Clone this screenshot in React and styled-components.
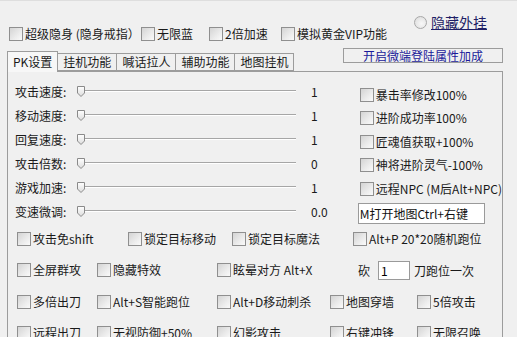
import React from "react";
import styled, { createGlobalStyle } from "styled-components";

const GlobalStyle = createGlobalStyle`
  html, body {
    margin: 0;
    padding: 0;
    background: #f0f0f0;
  }
  body {
    font-family: "Noto Sans CJK SC", sans-serif;
    font-size: 12px;
    color: #1a1a1a;
  }
`;

const topChecks = [
  { text: "超级隐身 (隐身戒指）", w: 132 },
  { text: "无限蓝", w: 68 },
  { text: "2倍加速", w: 72 },
  { text: "模拟黄金VIP功能" },
];

const tabs = ["PK设置", "挂机功能", "喊话拉人", "辅助功能", "地图挂机"];

const sliders = [
  { label: "攻击速度:", value: "1" },
  { label: "移动速度:", value: "1" },
  { label: "回复速度:", value: "1" },
  { label: "攻击倍数:", value: "0" },
  { label: "游戏加速:", value: "1" },
  { label: "变速微调:", value: "0.0" },
];

const rightChecks = [
  "暴击率修改100%",
  "进阶成功率100%",
  "匠魂值获取+100%",
  "神将进阶灵气-100%",
  "远程NPC (M后Alt+NPC)",
];

const rows = [
  [
    { text: "攻击免shift", w: 111 },
    { text: "锁定目标移动", w: 104 },
    { text: "锁定目标魔法", w: 121 },
    { text: "Alt+P 20*20随机跑位" },
  ],
  [
    { text: "多倍出刀", w: 80 },
    { text: "Alt+S智能跑位", w: 120 },
    { text: "Alt+D移动刺杀", w: 113 },
    { text: "地图穿墙", w: 87 },
    { text: "5倍攻击" },
  ],
  [
    { text: "远程出刀", w: 80 },
    { text: "无视防御+50%", w: 120 },
    { text: "幻影攻击", w: 113 },
    { text: "右键冲锋", w: 87 },
    { text: "无限召唤" },
  ],
];

const Check = ({ text, w }) => (
  <CheckItem $w={w}>
    <Box />
    <span>{text}</span>
  </CheckItem>
);

const Thumb = () => (
  <svg width="8" height="11" viewBox="0 0 8 11">
    <defs>
      <linearGradient id="tg" x1="0" y1="0" x2="0" y2="1">
        <stop offset="0" stopColor="#ffffff" />
        <stop offset="1" stopColor="#dcdcdc" />
      </linearGradient>
    </defs>
    <path d="M0.5 0.5 H7.5 V7 L4 10.5 L0.5 7 Z" fill="url(#tg)" stroke="#8a8a8a" />
  </svg>
);

const App = () => (
  <Window>
    <GlobalStyle />
    <Header>
      <TopChecks>
        {topChecks.map((c) => (
          <Check key={c.text} {...c} />
        ))}
      </TopChecks>
      <HideLink>
        <Radio />
        <span>隐藏外挂</span>
      </HideLink>
    </Header>
    <TabBar>
      <Tabs>
        {tabs.map((t, i) => (
          <Tab key={t} $active={i === 0}>
            {t}
          </Tab>
        ))}
      </Tabs>
      <BonusButton>开启微端登陆属性加成</BonusButton>
    </TabBar>
    <Panel>
      <Upper>
        <SliderCol>
          {sliders.map((s) => (
            <SliderRow key={s.label}>
              <SliderLabel>{s.label}</SliderLabel>
              <Thumb />
              <Track />
              <SliderValue>{s.value}</SliderValue>
            </SliderRow>
          ))}
        </SliderCol>
        <RightCol>
          {rightChecks.map((t) => (
            <RightRow key={t}>
              <Check text={t} />
            </RightRow>
          ))}
          <MapInput defaultValue="M打开地图Ctrl+右键" />
        </RightCol>
      </Upper>
      <OptionRow>
        {rows[0].map((c) => (
          <Check key={c.text} {...c} />
        ))}
      </OptionRow>
      <OptionRow>
        <Check text="全屏群攻" w={80} />
        <Check text="隐藏特效" w={120} />
        <Check text="眩晕对方 Alt+X" w={141} />
        <span>砍</span>
        <SmallInput defaultValue="1" />
        <span>刀跑位一次</span>
      </OptionRow>
      {rows.slice(1).map((r, i) => (
        <OptionRow key={i}>
          {r.map((c) => (
            <Check key={c.text} {...c} />
          ))}
        </OptionRow>
      ))}
    </Panel>
  </Window>
);

const Window = styled.div`
  width: 517px;
  height: 337px;
  overflow: hidden;
  background: #f0f0f0;
  border-top: 1px solid #dedede;
  box-sizing: border-box;
`;

const Header = styled.div`
  height: 45px;
  display: flex;
  justify-content: space-between;
  align-items: flex-start;
`;

const TopChecks = styled.div`
  display: flex;
  padding: 26px 0 0 9px;
`;

const CheckItem = styled.label`
  display: flex;
  align-items: center;
  flex: none;
  width: ${(p) => (p.$w ? `${p.$w}px` : "auto")};
  height: 14px;
  line-height: 14px;
  white-space: nowrap;
  cursor: default;
`;

const Box = styled.span`
  flex: none;
  width: 12px;
  height: 12px;
  margin-right: 2px;
  border: 1px solid #8f8f8f;
  background: linear-gradient(135deg, #d4d4d4 0%, #ececec 60%, #fafafa 100%);
`;

const HideLink = styled.div`
  display: flex;
  align-items: center;
  gap: 4px;
  margin: 12px 30px 0 0;
  font-size: 14px;
  line-height: 18px;
  color: #1f1f66;

  & > span {
    text-decoration: underline;
  }
`;

const Radio = styled.span`
  width: 11px;
  height: 11px;
  border-radius: 50%;
  border: 1px solid #a8a8a8;
  background: radial-gradient(circle at 60% 60%, #f8f8f8 0%, #dadada 100%);
`;

const TabBar = styled.div`
  height: 25px;
  display: flex;
  align-items: flex-end;
  justify-content: space-between;
  padding-left: 7px;
  position: relative;
  z-index: 1;
`;

const Tabs = styled.div`
  display: flex;
  align-items: flex-end;
`;

const Tab = styled.div`
  height: ${(p) => (p.$active ? "21px" : "18px")};
  margin-bottom: ${(p) => (p.$active ? "-1px" : "0")};
  margin-left: -1px;
  padding: 0 5px;
  border: 1px solid #9c9c9c;
  border-bottom: ${(p) => (p.$active ? "none" : "1px solid #9c9c9c")};
  background: ${(p) => (p.$active ? "#f7f7f7" : "#f0f0f0")};
  box-sizing: border-box;
  display: flex;
  align-items: center;
  font-size: 12px;
  line-height: 16px;

  &:first-child {
    margin-left: 0;
  }
`;

const BonusButton = styled.div`
  align-self: flex-start;
  margin: 2px 14px 0 0;
  width: 160px;
  height: 15px;
  border: 1px solid #9c9c9c;
  box-sizing: border-box;
  display: flex;
  align-items: center;
  justify-content: center;
  color: #1a1a9a;
  line-height: 13px;
`;

const Panel = styled.div`
  margin: 0 14px 0 7px;
  height: 267px;
  border: 1px solid #9c9c9c;
  border-bottom: none;
  box-sizing: border-box;
`;

const Upper = styled.div`
  height: 151px;
  display: flex;
`;

const SliderCol = styled.div`
  width: 351px;
  padding: 7px 0 0 7px;
  box-sizing: border-box;
`;

const SliderRow = styled.div`
  height: 24px;
  display: flex;
  align-items: center;
`;

const SliderLabel = styled.span`
  width: 62px;
  white-space: nowrap;
`;

const Track = styled.div`
  width: 211px;
  height: 1px;
  background: #a6a6a6;
  border-bottom: 1px solid #ffffff;
`;

const SliderValue = styled.span`
  margin-left: 15px;
`;

const RightCol = styled.div`
  padding-top: 11px;
`;

const RightRow = styled.div`
  height: 23.5px;
  display: flex;
  align-items: center;
  padding-left: 2px;
`;

const MapInput = styled.input`
  margin-top: 2px;
  width: 127px;
  height: 21px;
  box-sizing: border-box;
  border: 1px solid #9a9a9a;
  background: #ffffff;
  padding: 0 1px;
  font-family: "Noto Sans CJK SC", sans-serif;
  font-size: 12px;
  color: #111;
  outline: none;
`;

const OptionRow = styled.div`
  height: 31.5px;
  display: flex;
  align-items: center;
  padding-left: 9px;
  white-space: nowrap;
`;

const SmallInput = styled.input`
  width: 32px;
  height: 19px;
  margin: 0 4px 0 8px;
  box-sizing: border-box;
  border: 1px solid #9a9a9a;
  background: #ffffff;
  padding: 0 2px;
  font-family: "Noto Sans CJK SC", sans-serif;
  font-size: 12px;
  outline: none;
`;

export default App;
